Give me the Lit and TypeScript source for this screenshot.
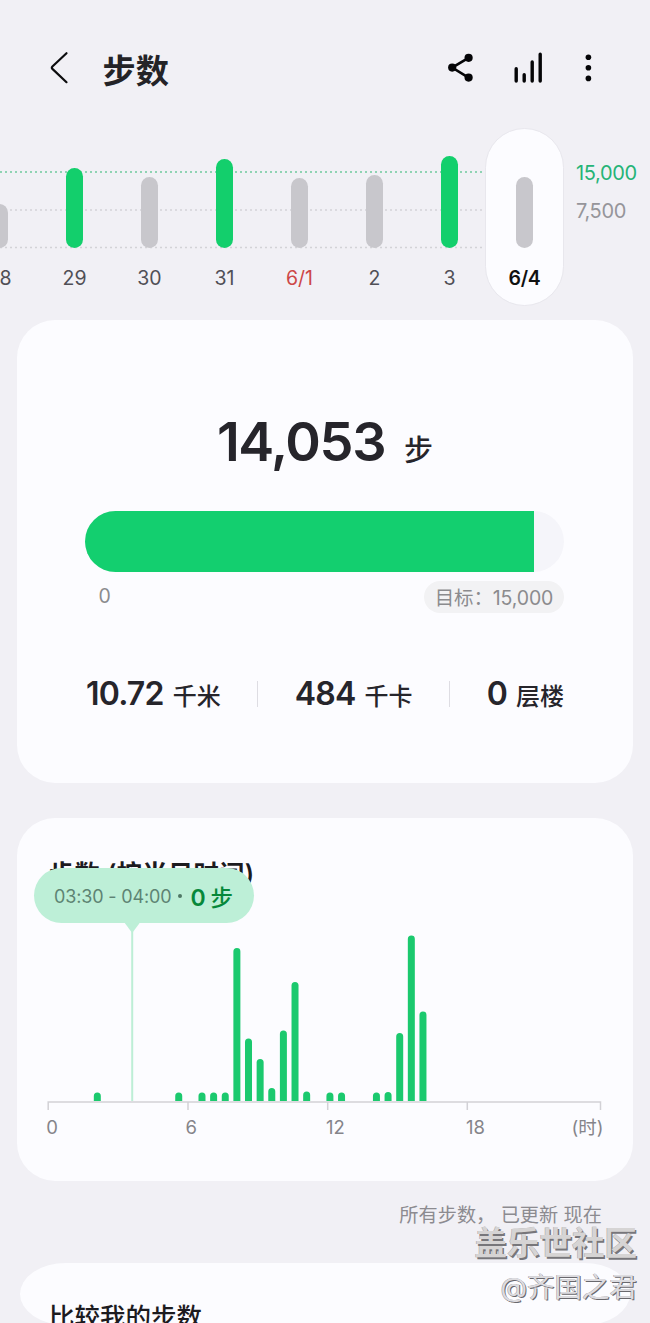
import { LitElement, html, svg, css } from "lit";
import { customElement, property } from "lit/decorators.js";
import { classMap } from "lit/directives/class-map.js";

interface Day {
  label: string;
  height: number;
  reached?: boolean;
  holiday?: boolean;
  selected?: boolean;
}

const DAYS: Day[] = [
  { label: "28", height: 44 },
  { label: "29", height: 80, reached: true },
  { label: "30", height: 71.5 },
  { label: "31", height: 89, reached: true },
  { label: "6/1", height: 70, holiday: true },
  { label: "2", height: 73.5 },
  { label: "3", height: 92.5, reached: true },
  { label: "6/4", height: 71.5, selected: true },
];

// Half-hour slot index -> bar height
const SLOTS: [number, number][] = [
  [4, 8.5], [11, 8.5], [13, 8.5], [14, 8.5], [15, 8.5], [16, 153],
  [17, 62.5], [18, 42], [19, 13], [20, 70.5], [21, 119], [22, 9.5],
  [24, 8.5], [25, 8.5], [28, 8.5], [29, 9], [30, 68], [31, 165.5], [32, 89.5],
];

@customElement("week-strip")
export class WeekStrip extends LitElement {
  static styles = css`
    :host { display: grid; height: 178px; overflow: hidden; }
    .grid, .days, .scale { grid-area: 1 / 1; }
    .grid { display: block; }
    .days { display: flex; margin-left: -38px; }
    .day {
      box-sizing: border-box; flex: none; width: 75px; height: 178px;
      display: flex; flex-direction: column; align-items: center;
      justify-content: flex-end; padding-bottom: 14px;
      font-size: 19.5px; line-height: 28px; color: #504f56;
    }
    .bar { width: 17px; border-radius: 9px; background: #c8c7cc; margin-bottom: 16px; }
    .reached .bar { background: #13cf6c; }
    .holiday { color: #cd4747; }
    .selected {
      width: 79px; margin-left: -2px; padding-bottom: 13px; border: 1px solid #e8e7ed; border-radius: 40px;
      background: #fcfcff; color: #111; font-weight: 600; letter-spacing: -0.3px;
    }
    .scale {
      justify-self: end; width: 74px; padding-top: 31px;
      font-size: 20px; line-height: 28px; letter-spacing: -0.35px;
    }
    .goal { color: #25b477; margin-bottom: 10px; }
    .half { color: #96959a; }
  `;
  render() {
    return html`
      <svg class="grid" width="486" height="178" fill="none" stroke-width="1.6" stroke-dasharray="2 3">
        <path d="M0 44H484" stroke="#6fc99d" />
        <path d="M0 82H484M0 119.5H484" stroke="#d3d2d7" />
      </svg>
      <div class="days">
        ${DAYS.map((d) => html`
          <div class=${classMap({ day: true, reached: !!d.reached, holiday: !!d.holiday, selected: !!d.selected })}>
            <div class="bar" style="height:${d.height}px"></div>
            <span>${d.label}</span>
          </div>`)}
      </div>
      <div class="scale"><div class="goal">15,000</div><div class="half">7,500</div></div>
    `;
  }
}

@customElement("hour-chart")
export class HourChart extends LitElement {
  static styles = css`
    :host { display: block; }
    svg { display: block; }
    .axis { fill: none; stroke: #d2d1d6; stroke-width: 1.5; }
    .bar { fill: #1bc96e; }
    .cursor { stroke: #bdeed6; stroke-width: 2; }
    .tick { fill: #85848a; font-size: 18.5px; }
  `;
  render() {
    const base = 171;
    return html`
      <svg width="616" height="220" viewBox="17 930 616 220">
        <path class="cursor" d="M132.2 930V1101" />
        ${SLOTS.map(([slot, h]) => {
          const x = 47.3 + slot * 11.63;
          const y = 930 + base - h;
          return svg`<path class="bar" d="M${x} ${y + h}V${y + 3.5}a3.5 3.5 0 0 1 7 0V${y + h}z" />`;
        })}
        <path class="axis" d="M48.2 1110V1102H600.5V1110M188 1102V1110M327.7 1102V1110M467.3 1102V1110" />
        <g class="tick">
          <text x="46.2" y="1134">0</text>
          <text x="185.5" y="1134">6</text>
          <text x="326" y="1134">12</text>
          <text x="466" y="1134">18</text>
          <text x="571.5" y="1133.5">(时)</text>
        </g>
      </svg>
    `;
  }
}

@customElement("stat-item")
export class StatItem extends LitElement {
  @property() value = "";
  @property() unit = "";
  static styles = css`
    :host { display: flex; align-items: baseline; color: #26252b; line-height: 40px; white-space: nowrap; }
    .value { font-size: 32px; font-weight: 600; letter-spacing: -0.8px; }
    .unit { font-size: 24px; font-weight: 500; margin-left: 9px; }
  `;
  render() {
    return html`<span class="value">${this.value}</span><span class="unit">${this.unit}</span>`;
  }
}

@customElement("app-root")
export class AppRoot extends LitElement {
  static styles = css`
    :host {
      display: block; position: relative; width: 650px; height: 1323px; overflow: hidden;
      background: #f1f0f5; font-family: Inter, "Noto Sans CJK SC", sans-serif;
    }
    header { display: flex; align-items: center; height: 128px; padding: 0 54px 0 48px; box-sizing: border-box; }
    .back { margin-top: 8px; }
    h1 { flex: 1; margin: 13px 0 0 32.5px; font-size: 33.2px; line-height: 44px; font-weight: 700; color: #242327; }
    .actions { margin-top: 8px; }
    .card { width: 616px; margin: 0 auto; background: #fcfcff; border-radius: 38px; box-sizing: border-box; }
    .summary { height: 463px; margin-top: 14px; padding: 87px 68px 0; }
    .total { display: flex; justify-content: center; align-items: baseline; height: 70px; line-height: 70px; color: #26252b; }
    .count { font-size: 54px; font-weight: 600; letter-spacing: -1.4px; }
    .steps { font-size: 29px; font-weight: 500; margin-left: 19px; }
    .track { margin-top: 34px; width: 479px; height: 61px; border-radius: 31px; overflow: hidden; background: #f5f5fa; }
    .fill { height: 100%; background: #13cf6f; }
    .range { display: flex; justify-content: space-between; margin-top: 9px; width: 479px; color: #8b8b8e; font-size: 19.5px; line-height: 32px; }
    .zero { margin: -1px 0 0 13.5px; }
    .target { box-sizing: border-box; width: 140px; height: 32px; border-radius: 16px; background: #f2f2f4; text-align: center; white-space: nowrap; line-height: 34px; letter-spacing: -0.15px; }
    .stats { display: flex; justify-content: space-between; align-items: center; width: 478px; margin: 61px 0 0 1px; }
    .rule { width: 1px; height: 26px; margin-top: -3px; background: #dedde3; }
    .hourly { position: relative; height: 363px; margin-top: 35px; padding-top: 38px; }
    h2 { margin: 0 0 0 32px; height: 74px; font-size: 25.2px; line-height: 36px; font-weight: 600; letter-spacing: 0.4px; color: #1c1b1f; white-space: nowrap; }
    .tip {
      position: absolute; left: 17px; top: 50px; width: 220px; height: 55px; border-radius: 28px;
      background: #bdefd7; color: #5d8473; font-size: 18px; box-sizing: border-box;
      display: flex; align-items: center; padding: 1px 0 0 20px; white-space: nowrap;
    }
    .time { letter-spacing: -0.15px; }
    .dot { width: 4px; height: 4px; margin: 0 8px 0 7px; border-radius: 2px; background: #4f7765; }
    .tip b { color: #06883a; font-size: 23px; font-weight: 600; letter-spacing: -0.5px; }
    .tip .unit { font-weight: 500; font-size: 22.5px; }
    .arrow { position: absolute; left: 90px; top: 54px; }
    .updated { margin: 18px 48px 0 0; text-align: right; font-size: 19.2px; line-height: 32px; color: #8c8b90; white-space: pre; }
    .compare { width: 610px; height: 62px; margin-top: 32px; border-radius: 46px / 31px; padding: 36px 0 0 29px; font-size: 25.5px; line-height: 36px; font-weight: 500; color: #1c1b1f; white-space: nowrap; }
    .mark { position: absolute; right: 13px; top: 1223px; text-align: right; white-space: nowrap; }
    .community { font-size: 32.5px; line-height: 42px; font-weight: 700; color: #d6d4d4; text-shadow: 1.5px 1.5px 0 #77767a, -0.5px -0.5px 0 #a9a8aa; }
    .author { font-size: 27.5px; line-height: 44px; color: #dddce0; text-shadow: 1px 1px 0 #69686d, -0.5px -0.5px 0 #99989c; }
  `;
  render() {
    return html`
      <header>
        <svg class="back" width="22" height="34" viewBox="48 51 22 34" fill="none" stroke="#0c0c0e" stroke-width="2.2" stroke-linecap="round" stroke-linejoin="round">
          <path d="M66.5 53.2L52.4 66.5Q51.2 67.7 52.4 68.9L66.5 82.2" />
        </svg>
        <h1>步数</h1>
        <svg class="actions" width="150" height="36" viewBox="446 50 150 36" fill="#050507">
          <path d="M468.5 57.8L452.2 67.6L468.5 77.6" fill="none" stroke="#050507" stroke-width="2.6" />
          <circle cx="468.6" cy="57.8" r="4.1" /><circle cx="452.2" cy="67.6" r="4.1" /><circle cx="468.6" cy="77.6" r="4.1" />
          <path d="M516.2 68.7V81M524.2 74.7V81M532.2 62V81M540.2 54.2V81" fill="none" stroke="#050507" stroke-width="3.4" stroke-linecap="round" />
          <circle cx="588.4" cy="57.2" r="2.8" /><circle cx="588.4" cy="67.8" r="2.8" /><circle cx="588.4" cy="78.4" r="2.8" />
        </svg>
      </header>
      <week-strip></week-strip>
      <section class="card summary">
        <div class="total"><span class="count">14,053</span><span class="steps">步</span></div>
        <div class="track"><div class="fill" style="width:${((14053 / 15000) * 100).toFixed(2)}%"></div></div>
        <div class="range"><span class="zero">0</span><span class="target">目标：15,000</span></div>
        <div class="stats">
          <stat-item value="10.72" unit="千米"></stat-item><i class="rule"></i>
          <stat-item value="484" unit="千卡"></stat-item><i class="rule"></i>
          <stat-item value="0" unit="层楼"></stat-item>
        </div>
      </section>
      <section class="card hourly">
        <h2>步数 (按当日时间)</h2>
        <hour-chart></hour-chart>
        <svg class="arrow" width="50" height="62"><path d="M17 50L25.2 61L33.4 50z" fill="#bdefd7" /></svg>
        <div class="tip"><span class="time">03:30 - 04:00</span><i class="dot"></i><b>0 <span class="unit">步</span></b></div>
      </section>
      <div class="updated">所有步数， 已更新 现在</div>
      <section class="card compare">比较我的步数</section>
      <div class="mark"><div class="community">盖乐世社区</div><div class="author">@齐国之君</div></div>
    `;
  }
}
